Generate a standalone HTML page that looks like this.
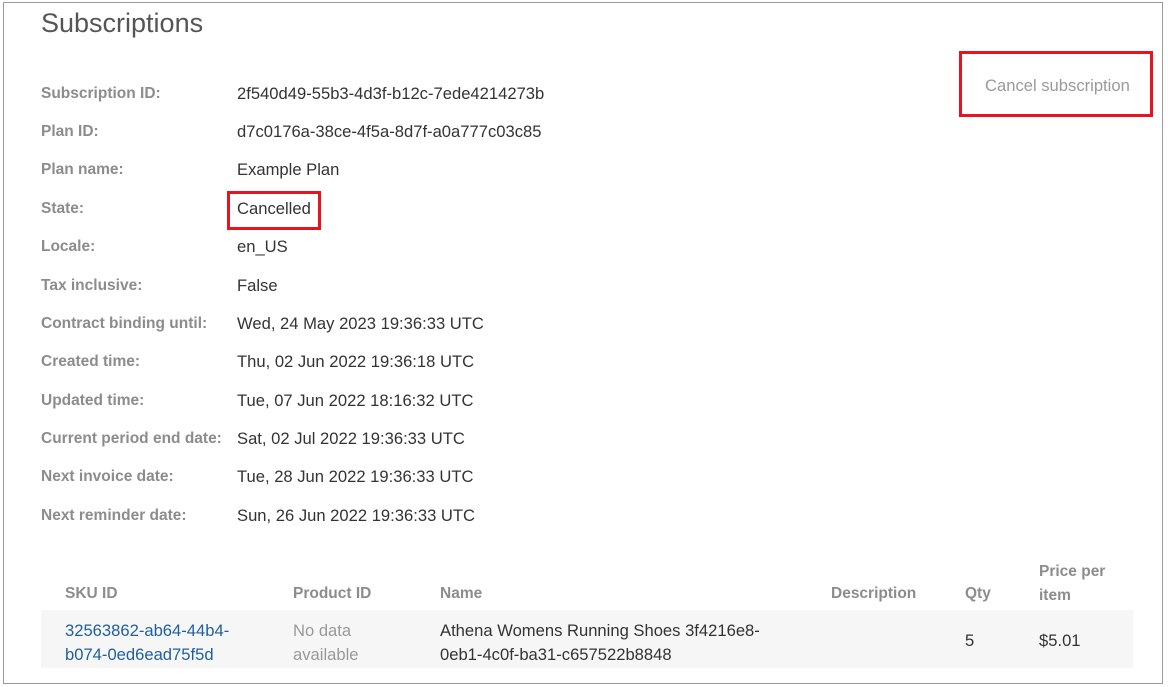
<!DOCTYPE html>
<html><head><style>
body{margin:0;width:1168px;height:687px;background:#fff;font-family:"Liberation Sans",Arial,sans-serif;position:relative;overflow:hidden}
.frame{position:absolute;left:3px;top:2px;width:1160px;height:682px;border:1px solid #9a9a9a;box-sizing:border-box}
.t{position:absolute;white-space:nowrap;font-size:16.6px;line-height:20px}
.l{left:41px;color:#8c8c8c;font-weight:bold;font-size:15.5px}
.v{left:237px;color:#333}
.h{color:#8c8c8c;font-weight:bold;font-size:15.5px}
.red{position:absolute;border:3px solid #e5141e;box-sizing:border-box}
</style></head><body>
<div class="frame"></div>
<div class="t" style="left:41px;top:8px;font-size:27px;line-height:30px;color:#555">Subscriptions</div>
<div class="t" style="left:985px;top:76px;color:#9a9a9a">Cancel subscription</div>
<div class="red" style="left:959px;top:51px;width:194px;height:66px"></div>

<div class="t l" style="top:84px">Subscription ID:</div><div class="t v" style="top:84px">2f540d49-55b3-4d3f-b12c-7ede4214273b</div>
<div class="t l" style="top:122px">Plan ID:</div><div class="t v" style="top:122px">d7c0176a-38ce-4f5a-8d7f-a0a777c03c85</div>
<div class="t l" style="top:160px">Plan name:</div><div class="t v" style="top:160px">Example Plan</div>
<div class="t l" style="top:199px">State:</div><div class="t v" style="top:199px">Cancelled</div>
<div class="red" style="left:227px;top:191px;width:94px;height:39px"></div>
<div class="t l" style="top:237px">Locale:</div><div class="t v" style="top:237px">en_US</div>
<div class="t l" style="top:276px">Tax inclusive:</div><div class="t v" style="top:276px">False</div>
<div class="t l" style="top:314px">Contract binding until:</div><div class="t v" style="top:314px">Wed, 24 May 2023 19:36:33 UTC</div>
<div class="t l" style="top:352px">Created time:</div><div class="t v" style="top:352px">Thu, 02 Jun 2022 19:36:18 UTC</div>
<div class="t l" style="top:391px">Updated time:</div><div class="t v" style="top:391px">Tue, 07 Jun 2022 18:16:32 UTC</div>
<div class="t l" style="top:429px">Current period end date:</div><div class="t v" style="top:429px">Sat, 02 Jul 2022 19:36:33 UTC</div>
<div class="t l" style="top:467px">Next invoice date:</div><div class="t v" style="top:467px">Tue, 28 Jun 2022 19:36:33 UTC</div>
<div class="t l" style="top:506px">Next reminder date:</div><div class="t v" style="top:506px">Sun, 26 Jun 2022 19:36:33 UTC</div>

<div style="position:absolute;left:41px;top:610px;width:1092px;height:58px;background:#f6f6f6"></div>
<div class="t h" style="left:65px;top:584px">SKU ID</div>
<div class="t h" style="left:293px;top:584px">Product ID</div>
<div class="t h" style="left:440px;top:584px">Name</div>
<div class="t h" style="left:831px;top:584px">Description</div>
<div class="t h" style="left:965px;top:584px">Qty</div>
<div class="t h" style="left:1039px;top:560px;line-height:24px">Price per<br>item</div>
<div class="t" style="left:65px;top:619px;line-height:24px;color:#1f5fa0">32563862-ab64-44b4-<br>b074-0ed6ead75f5d</div>
<div class="t" style="left:293px;top:619px;line-height:24px;color:#999">No data<br>available</div>
<div class="t" style="left:440px;top:619px;line-height:24px;color:#333">Athena Womens Running Shoes 3f4216e8-<br>0eb1-4c0f-ba31-c657522b8848</div>
<div class="t" style="left:965px;top:631px;color:#333">5</div>
<div class="t" style="left:1039px;top:631px;color:#333">$5.01</div>
</body></html>
